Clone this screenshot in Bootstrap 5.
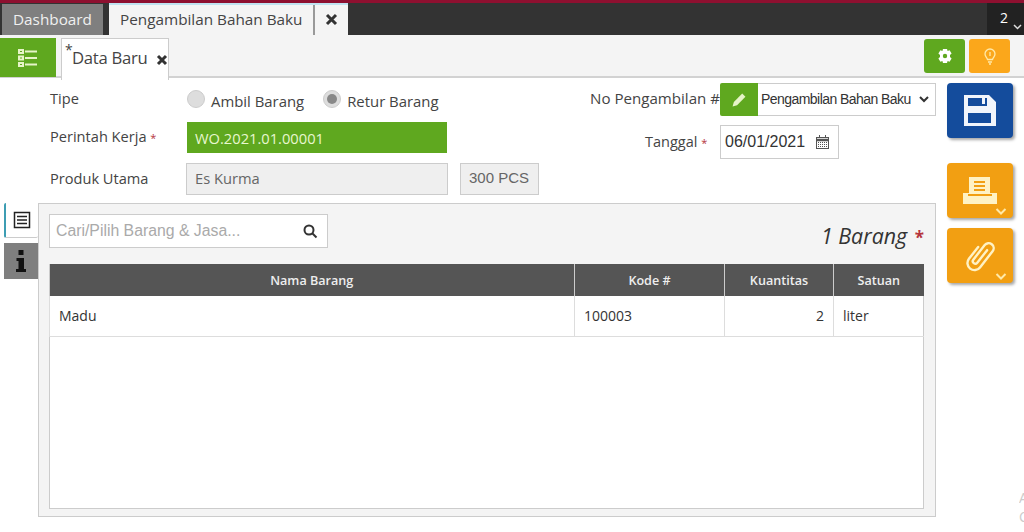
<!DOCTYPE html>
<html lang="id"><head><meta charset="utf-8"><title>Pengambilan Bahan Baku</title>
<link href="https://cdn.jsdelivr.net/npm/bootstrap@5.3.0/dist/css/bootstrap.min.css" rel="stylesheet">
<style>
html,body{height:532px;overflow:hidden;background:#fff}
body{font-family:"Open Sans","Noto Sans",sans-serif;font-size:14px;color:#333}
.topline{height:3px;background:#8e1030}
.tabbar{height:32px;background:#333;color:#fff}
.tab-dash{width:101px;margin-left:2px;background:#7f7f7f;color:#f0f0f0;font-size:15.3px;padding:4px 0 0 11px;margin-top:1px}
.tab-open{margin-left:6px;width:239px;background:#f4f4f4;border-top:2px solid #bfe3f0;color:#444;font-size:15.3px}
.tab-open .lbl{width:206px;padding:3px 0 0 11px;border-right:2px solid #999;white-space:nowrap}
.tab-open .cls{flex:1;text-align:center;padding-top:2px}
.count{width:37px;background:#222;color:#fff;font-size:14px;padding:4px 0 0 13px;position:relative}
.count .chev{right:2px;bottom:5px}
.subbar{height:43px;background:#f4f4f4;border-bottom:2px solid #d2d2d2}
.listbtn{width:56px;height:39px;margin-top:3px;background:#5fa81f}
.dtab{margin:3px 0 -2px 5px;width:108px;height:42px;background:#fff;border:1px solid #ccc;border-bottom:0;font-size:16.7px;padding:6px 0 0 10px;position:relative;color:#444;letter-spacing:-.3px;white-space:nowrap}
.dtab .star{position:absolute;left:3px;top:0;font-size:14px}
.dtab svg{margin-left:5px}
.sq{width:41px;height:34px;border-radius:3px}
.sq-g{background:#5fa81f}.sq-o{background:#fba71b}
.mainwrap{height:454px}
.formarea{height:125px;width:936px;flex:none}
.frmleft{width:560px;padding:5px 0 0 50px;flex:none}
.lb{width:137px;flex:none;color:#444;font-size:14.6px}
.lb-p{padding-top:5px}
.lb i,.lbr i{color:#b5343c;font-style:normal;font-size:11px}
.ttl i{color:#b5343c;font-style:normal;font-size:17px;font-weight:700;margin-left:2px}
.r1{height:39px;padding-top:5px}
.r2{height:41px}
.r3{height:42px}
.radio-c{width:18px;height:18px;border-radius:50%;background:#ddd;border:1px solid #ccc;display:inline-block;margin-top:2px;flex:none}
.radio-on{display:flex;align-items:center;justify-content:center}
.radio-on::after{content:"";width:10px;height:10px;border-radius:50%;background:#888}
.opt{color:#444;font-size:14.9px;align-items:flex-start}
.opt-txt{margin-left:6px;padding-top:2px}
.opt-b{margin-left:19px}
.wo{width:260px;height:31px;background:#5fa81f;color:#e8f7d0;padding:5px 8px;font-size:14.7px}
.ro{height:32px;background:#efefef;border:1px solid #ccc;color:#666;padding:3px 8px;font-size:14.7px;margin-left:-1px;width:262px}
.ro2{width:79px;margin-left:12px;font-family:"Liberation Sans",sans-serif;font-size:15px;padding-top:3px}
.frmright{padding-top:5px;flex:1}
.lbr{color:#444;font-size:15.1px;white-space:nowrap}
.pen{width:38px;height:33px;background:#5fa81f;border-radius:2px 0 0 2px}
.sel{width:178px;height:33px;border:1px solid #ccc;border-left:0;font-family:"Liberation Sans",sans-serif;font-size:14px;letter-spacing:-.55px;color:#333;padding-left:3px}
.date{width:119px;height:34px;border:1px solid #ccc;font-family:"Liberation Sans",sans-serif;font-size:16px;color:#333;padding:0 8px 0 4px}
.tanggal{margin-top:9px}
.tgl{margin-left:85px;padding-top:6px;width:75px;font-size:14.5px}
.panelrow{height:314px;width:936px;flex:none}
.vt{width:34px;margin-left:4px;flex:none}
.vt1{width:34px;height:35px;background:#fff;border-left:2px solid #3d9db3;border-bottom:1px solid #ccc;border-radius:2px}
.vt2{width:34px;height:36px;margin-top:5px;background:#7f7f7f}
.panelbox{width:898px;background:#f4f4f4;border:1px solid #ccc;padding:10px 11px 7px 10px}
.srchrow{height:34px}
.srch{width:279px;height:34px;background:#fff;border:1px solid #ccc;font-family:"Liberation Sans",sans-serif;font-size:15.8px;color:#aaa;padding:0 9px 0 6px}
.ttl{font-size:21.4px;font-style:italic;color:#333;line-height:1;padding-top:11px}
.grid{margin-top:16px;height:245px;width:875px;background:#fff;border:1px solid #ccc;border-top:0}
.grid table{width:874px;margin-left:-1px;table-layout:fixed;border-collapse:collapse;margin-bottom:0}
.grid th{height:32px;background:#555;color:#eee;font-weight:600;font-size:12.6px;text-align:center;border-left:1px solid #ccc;padding:3px 0 0;vertical-align:middle}
.grid th:first-child{border-left:0}
.grid td{height:40px;padding:0 9px;font-size:14px;color:#333;border-bottom:1px solid #ddd;border-left:1px solid #ddd;vertical-align:middle}
.side{width:66px;margin-left:11px;padding-top:5px;flex:none}
.act{width:66px;height:55px;border-radius:4px;box-shadow:2px 2px 3px rgba(0,0,0,.35);position:relative}
.act-b{background:#144c9c;margin-bottom:25px}
.act-o{background:#f29f12;margin-bottom:10px}
.chev{position:absolute;right:6px;bottom:3px}
.edgef{position:absolute;right:0;top:488px;font-size:14px;line-height:19px;color:#ccc;width:5px;overflow:hidden}
</style></head><body>
<div class="topline"></div>
<div class="tabbar d-flex">
  <div class="tab-dash">Dashboard</div>
  <div class="tab-open d-flex"><div class="lbl">Pengambilan Bahan Baku</div><div class="cls"><svg width="13" height="13" viewBox="0 0 13 13"><path d="M2 2l9 9M11 2l-9 9" stroke="#333" stroke-width="3"/></svg></div></div>
  <div class="ms-auto count">2<svg class="chev" width="9" height="6" viewBox="0 0 9 6"><path d="M1 1l3.500 3.500L8 1" stroke="#ddd" stroke-width="1.500" fill="none"/></svg></div>
</div>
<div class="subbar d-flex">
  <div class="listbtn d-flex align-items-center justify-content-center"><svg width="20" height="18" viewBox="0 0 20 18" fill="none" stroke="#e6f4c8" stroke-width="2"><rect x="1" y="1" width="4" height="3"/><rect x="1" y="7.500" width="4" height="3"/><rect x="1" y="14" width="4" height="3"/><path d="M7 2.500h12M7 9h12M7 15.500h12"/></svg></div>
  <div class="dtab"><span class="star">*</span>Data Baru <svg width="12" height="12" viewBox="0 0 12 12"><path d="M2 2l8 8M10 2l-8 8" stroke="#333" stroke-width="3"/></svg></div>
  <div class="ms-auto d-flex gap-1 pt-1" style="padding-right:14px">
    <div class="sq sq-g d-flex align-items-center justify-content-center"><svg width="16" height="16" viewBox="0 0 16 16"><path fill-rule="evenodd" fill="#fff" d="M6 1h4l.6 2 2-.8 2 3.400-1.600 1.400v2l1.600 1.400-2 3.400-2-.8-.6 2H6l-.6-2-2 .8-2-3.400L3 9V7L1.400 5.600l2-3.400 2 .8zM8 5.800a2.200 2.200 0 1 0 0 4.400 2.200 2.200 0 0 0 0-4.400z"/></svg></div>
    <div class="sq sq-o d-flex align-items-center justify-content-center"><svg width="14" height="17" viewBox="0 0 14 17" fill="none" stroke="#ffe9a8" stroke-width="1.300"><path d="M4.500 11.500C4 9.500 2 8.500 2 6a5 5 0 0 1 10 0c0 2.500-2 3.500-2.500 5.500z"/><path d="M5 14h4M6 16h2M7 4v4"/></svg></div>
  </div>
</div>
<div class="mainwrap d-flex">
  <div class="flex-shrink-0">
    <div class="formarea d-flex">
      <div class="frmleft">
        <div class="r1 d-flex"><div class="lb">Tipe</div>
          <div class="d-flex align-items-start">
            <span class="d-flex opt"><span class="radio-c"></span><span class="opt-txt">Ambil Barang</span></span>
            <span class="d-flex opt opt-b"><span class="radio-c radio-on"></span><span class="opt-txt">Retur Barang</span></span>
          </div></div>
        <div class="r2 d-flex"><div class="lb pt-1">Perintah Kerja <i>*</i></div><div class="wo">WO.2021.01.00001</div></div>
        <div class="r3 d-flex"><div class="lb lb-p">Produk Utama</div><div class="ro">Es Kurma</div><div class="ro ro2">300 PCS</div></div>
      </div>
      <div class="frmright">
        <div class="d-flex justify-content-end"><div class="lbr pt-1">No Pengambilan #</div><div class="pen d-flex align-items-center justify-content-center"><svg width="18" height="18" viewBox="0 0 14 14"><path d="M2 12l1-3.500L9.500 2 12 4.500 5.500 11z" fill="#e6f4c8"/></svg></div><div class="sel d-flex align-items-center">Pengambilan Bahan Baku<svg class="ms-2" width="10" height="7" viewBox="0 0 10 7"><path d="M1 1l4 4 4-4" stroke="#333" stroke-width="2" fill="none"/></svg></div></div>
        <div class="d-flex tanggal"><div class="lbr tgl">Tanggal <i>*</i></div><div class="date d-flex align-items-center justify-content-between">06/01/2021<svg width="15" height="15" viewBox="0 0 15 15" fill="none" stroke="#555"><rect x="1.500" y="2.500" width="12" height="11"/><path d="M1 5h13" stroke-width="2.500"/><path d="M3 7.500h9M3 9.500h9M3 11.500h9" stroke-dasharray="1 1"/><path d="M4.500 0v2M10.500 0v2"/></svg></div></div>
      </div>
    </div>
    <div class="panelrow d-flex">
      <div class="vt">
        <div class="vt1 d-flex align-items-center justify-content-center"><svg width="18" height="18" viewBox="0 0 18 18" fill="none" stroke="#222" stroke-width="1.500"><rect x="1.500" y="1.500" width="15" height="15"/><path d="M4 5.500h10M4 9h10M4 12.500h10"/></svg></div>
        <div class="vt2 d-flex align-items-center justify-content-center"><svg width="12" height="24" viewBox="0 0 12 24" fill="#111"><rect x="3.500" y="1" width="5" height="5"/><path d="M1.500 9h7.500v11h2v3H1v-3h2.500v-8h-2z"/></svg></div>
      </div>
      <div class="panelbox">
        <div class="srchrow d-flex justify-content-between align-items-start">
          <div class="srch d-flex align-items-center justify-content-between">Cari/Pilih Barang &amp; Jasa...<svg width="15" height="15" viewBox="0 0 15 15" fill="none" stroke="#333" stroke-width="2"><circle cx="6" cy="6" r="4.500"/><path d="M9.500 9.500l4 4"/></svg></div>
          <div class="ttl">1 Barang <i>*</i></div>
        </div>
        <div class="grid">
          <table class="table-borderless"><colgroup><col style="width:525px"><col style="width:150px"><col style="width:109px"><col style="width:90px"></colgroup>
            <thead><tr><th>Nama Barang</th><th>Kode #</th><th>Kuantitas</th><th>Satuan</th></tr></thead>
            <tbody><tr><td>Madu</td><td>100003</td><td class="text-end">2</td><td>liter</td></tr></tbody>
          </table>
        </div>
      </div>
    </div>
  </div>
  <div class="side">
    <div class="act act-b d-flex align-items-center justify-content-center"><svg width="32" height="31" viewBox="0 0 32 31"><path fill-rule="evenodd" fill="#f1f5fb" d="M0 0h25l7 7v24H0zM4 3v8h19V3h-2v6h-3V3zM4 18v10h23V18z"/></svg></div>
    <div class="act act-o d-flex align-items-center justify-content-center"><svg width="34" height="27" viewBox="0 0 34 27"><path fill="#fff2c4" d="M6 0h21v16h7v11H0V16h6z"/><path fill="none" stroke="#f29f12" stroke-width="2" d="M11 5h11M11 9h11M11 13h11M5 18h24"/></svg><svg class="chev" width="12" height="7" viewBox="0 0 12 7"><path d="M1.500 1l4.500 4.500L10.500 1" stroke="#ffe9a8" stroke-width="2" fill="none"/></svg></div>
    <div class="act act-o d-flex align-items-center justify-content-center"><svg width="32" height="36" viewBox="0 0 32 36" fill="none" stroke="#fff2c4" stroke-width="2.400" stroke-linecap="round"><g transform="rotate(38 16 18) translate(8 0)"><path d="M10 9V25a2.500 2.500 0 0 1-5 0V6.500a5 5 0 0 1 10 0V27a7 7 0 0 1-14 0V12"/></g></svg><svg class="chev" width="12" height="7" viewBox="0 0 12 7"><path d="M1.500 1l4.500 4.500L10.500 1" stroke="#ffe9a8" stroke-width="2" fill="none"/></svg></div>
  </div>
</div>
<div class="edgef">A<br>C</div>
</body></html>
